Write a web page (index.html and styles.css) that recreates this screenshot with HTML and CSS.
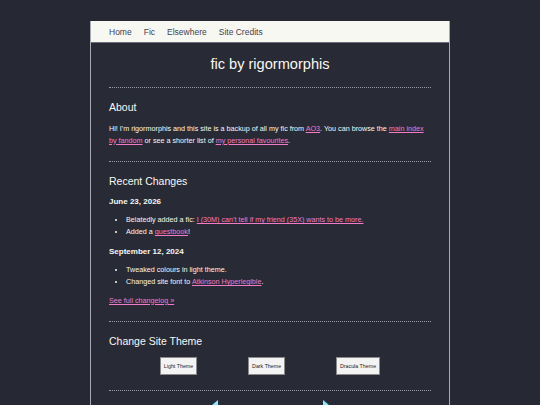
FILE: index.html
```html
<!DOCTYPE html>
<html lang="en">
<head>
<meta charset="utf-8">
<title>fic by rigormorphis</title>
<link rel="stylesheet" href="styles.css">
</head>
<body>
<div class="page">
  <nav class="nav">
    <a href="#">Home</a>
    <a href="#">Fic</a>
    <a href="#">Elsewhere</a>
    <a href="#">Site Credits</a>
  </nav>
  <main class="main">
    <h1 class="title">fic by rigormorphis</h1>
    <hr class="rule">
    <section class="sec">
      <h2 class="heading">About</h2>
      <p class="text">Hi! I'm rigormorphis and this site is a backup of all my fic from <a href="#">AO3</a>. You can browse the <a href="#">main index by fandom</a> or see a shorter list of <a href="#">my personal favourites</a>.</p>
    </section>
    <hr class="rule">
    <section class="sec">
      <h2 class="heading">Recent Changes</h2>
      <h3 class="date">June 23, 2026</h3>
      <ul class="list">
        <li>Belatedly added a fic: <a href="#">I (30M) can't tell if my friend (35X) wants to be more.</a></li>
        <li>Added a <a href="#">guestbook</a>!</li>
      </ul>
      <h3 class="date">September 12, 2024</h3>
      <ul class="list">
        <li>Tweaked colours in light theme.</li>
        <li>Changed site font to <a href="#">Atkinson Hyperlegible</a>.</li>
      </ul>
      <p class="more"><a href="#">See full changelog »</a></p>
    </section>
    <hr class="rule">
    <section class="sec">
      <h2 class="heading">Change Site Theme</h2>
      <div class="themes">
        <button class="btn">Light Theme</button>
        <button class="btn">Dark Theme</button>
        <button class="btn">Dracula Theme</button>
      </div>
    </section>
    <hr class="rule">
    <div class="ring">
      <svg class="arrow" width="20" height="10" viewBox="0 0 20 10"><polygon points="14,0 14,10 2,10" fill="#8be9fd"/></svg>
      <svg class="arrow" width="20" height="10" viewBox="0 0 20 10"><polygon points="6,0 6,10 18,10" fill="#8be9fd"/></svg>
    </div>
  </main>
</div>
</body>
</html>
```

FILE: styles.css
```css
html, body {
  margin: 0;
  padding: 0;
  background: #262834;
}
body {
  font-family: "Liberation Sans", Arial, sans-serif;
  color: #f8f8f2;
  overflow: hidden;
  height: 405px;
}
.page {
  width: 358px;
  margin: 21px auto 0;
  border-left: 1px solid #a9a9b6;
  border-right: 1px solid #a9a9b6;
  background: #282a36;
  min-height: 400px;
}
.nav {
  display: flex;
  gap: 12px;
  height: 22px;
  align-items: center;
  padding: 0 18px;
  background: #f8f8f2;
  border-bottom: 1px solid #6b6d7a;
  box-sizing: border-box;
}
.nav a {
  color: #3f4152;
  text-decoration: none;
  font-size: 8.5px;
}
.main {
  padding: 0 18px;
}
.title {
  font-size: 14.6px;
  line-height: 18px;
  font-weight: normal;
  text-align: center;
  margin: 12px 0 14px;
}
.rule {
  border: 0;
  border-top: 1px dotted #9a9aa6;
  margin: 0;
  height: 0;
}
.heading {
  font-size: 10.5px;
  line-height: 14px;
  font-weight: normal;
  margin: 12px 0 0;
}
.text {
  font-size: 7.2px;
  line-height: 11.5px;
  margin: 9px 0 15px;
}
a {
  color: #f27ac6;
}
.date {
  font-size: 8px;
  line-height: 11px;
  font-weight: bold;
  margin: 7.5px 0 0;
}
.list {
  font-size: 7.2px;
  line-height: 12px;
  margin: 7.5px 0 0;
  padding-left: 17px;
}
.more {
  font-size: 7.2px;
  line-height: 11px;
  margin: 6.5px 0 15.5px;
}
.themes {
  display: flex;
  justify-content: space-evenly;
  margin: 9px 0 15px;
}
.btn {
  font-family: "Liberation Sans", Arial, sans-serif;
  font-size: 5.3px;
  height: 18px;
  padding: 0 3px;
  background: #f3f3f3;
  color: #222;
  border: 1px solid #8a8a8a;
  border-radius: 0;
}
.ring {
  display: flex;
  justify-content: center;
  gap: 93px;
  margin-top: 9px;
}
.arrow {
  display: block;
}
```
